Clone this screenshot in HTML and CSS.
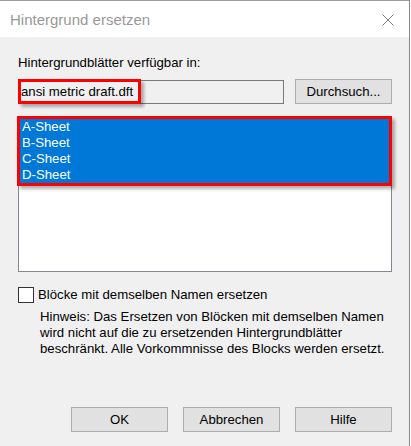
FILE: index.html
```html
<!DOCTYPE html>
<html lang="de">
<head>
<meta charset="utf-8">
<title>Hintergrund ersetzen</title>
<link rel="stylesheet" href="styles.css">
</head>
<body>
<div class="window">
  <div class="titlebar">
    <span class="title">Hintergrund ersetzen</span>
    <svg class="close" width="12" height="12" viewBox="0 0 12 12">
      <path d="M0.5 0.5 L11.5 11.5 M11.5 0.5 L0.5 11.5" stroke="#7a7a7a" stroke-width="1" fill="none"/>
    </svg>
  </div>
  <div class="content">
    <div class="label">Hintergrundblätter verfügbar in:</div>
    <div class="row">
      <div class="textbox">
        <span>ansi metric draft.dft</span>
        <div class="mark mark-text"></div>
      </div>
      <button class="btn">Durchsuch...</button>
    </div>
    <div class="list">
      <div class="item sel">A-Sheet</div>
      <div class="item sel">B-Sheet</div>
      <div class="item sel">C-Sheet</div>
      <div class="item sel">D-Sheet</div>
      <div class="mark mark-list"></div>
    </div>
    <label class="check">
      <span class="box"></span>
      <span>Blöcke mit demselben Namen ersetzen</span>
    </label>
    <p class="note">Hinweis: Das Ersetzen von Blöcken mit demselben Namen wird nicht auf die zu ersetzenden Hintergrundblätter beschränkt. Alle Vorkommnisse des Blocks werden ersetzt.</p>
    <div class="actions">
      <button class="btn">OK</button>
      <button class="btn">Abbrechen</button>
      <button class="btn">Hilfe</button>
    </div>
  </div>
</div>
</body>
</html>
```

FILE: styles.css
```css
html, body {
  margin: 0;
  padding: 0;
  background: #ffffff;
}
body {
  font-family: "Liberation Sans", Arial, sans-serif;
  font-size: 13.2px;
  color: #000;
}
.window {
  width: 409px;
  height: 445px;
  border-top: 1px solid #9a9a9a;
  border-right: 1px solid #8a8a8a;
  background: #f0f0f0;
}
.titlebar {
  height: 36px;
  background: #ffffff;
  display: flex;
  align-items: center;
  justify-content: space-between;
  padding: 0 15px 0 10px;
}
.title {
  font-size: 15px;
  color: #999999;
  margin-top: 1px;
}
.close {
  display: block;
  margin-top: 1px;
}
.content {
  padding: 18px 17px 0 18px;
}
.label {
  line-height: 16px;
}
.row {
  display: flex;
  align-items: flex-end;
  gap: 11px;
  margin-top: 8px;
}
.textbox {
  position: relative;
  box-sizing: border-box;
  width: 266px;
  height: 24px;
  border: 1px solid #7a7a7a;
  background: #f0f0f0;
  padding: 0 2px;
  line-height: 22px;
}
.btn {
  box-sizing: border-box;
  width: 97px;
  height: 25px;
  border: 1px solid #adadad;
  background: #e1e1e1;
  font-family: "Liberation Sans", Arial, sans-serif;
  font-size: 13.2px;
  color: #000;
  padding: 0;
}
.mark {
  position: absolute;
  box-sizing: border-box;
  border: 3px solid #ff0000;
  box-shadow: 3px 3px 3px rgba(0, 0, 0, 0.3);
}
.mark-text {
  left: -1px;
  top: -2px;
  width: 123px;
  height: 25px;
}
.list {
  position: relative;
  box-sizing: border-box;
  width: 374px;
  height: 155px;
  margin-top: 13px;
  border: 1px solid #828790;
  background: #ffffff;
  padding-top: 1px;
}
.item {
  height: 16px;
  line-height: 16px;
  padding-left: 3px;
}
.item.sel {
  background: #0078d7;
  color: #ffffff;
}
.mark-list {
  left: -2px;
  top: -2px;
  width: 375px;
  height: 70px;
}
.check {
  display: flex;
  align-items: center;
  gap: 4px;
  margin-top: 15px;
  line-height: 16px;
}
.box {
  box-sizing: border-box;
  width: 16px;
  height: 16px;
  border: 1px solid #333333;
  background: #ffffff;
}
.note {
  margin: 6px 0 0 22px;
  line-height: 16px;
}
.actions {
  display: flex;
  justify-content: flex-end;
  gap: 15px;
  margin-top: 50px;
}
```
